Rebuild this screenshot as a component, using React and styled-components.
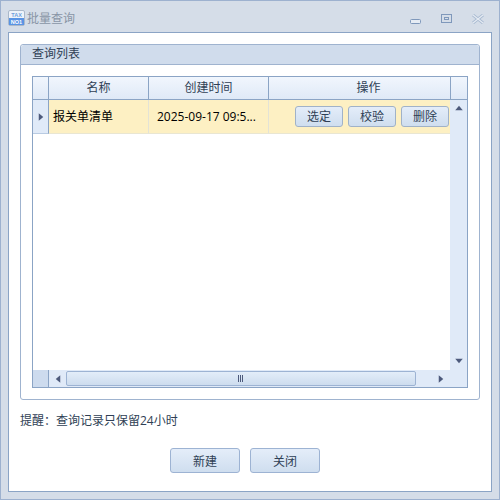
import React from 'react';
import styled, { createGlobalStyle } from 'styled-components';

const GlobalStyle = createGlobalStyle`
  html, body { margin: 0; padding: 0; background: #fff; }
  * { box-sizing: border-box; }
  body { font-family: "Open Sans", "Noto Sans CJK SC", sans-serif; font-size: 12px; }
`;

const LINE = '#8ba4c5';
const HEAD_BG = 'linear-gradient(#f1f6fd, #dfe9f7)';
const BTN_BG = 'linear-gradient(#e4edf9, #cfdeef)';

const Window = styled.div`
  width: 500px;
  height: 500px;
  display: flex;
  flex-direction: column;
  padding: 0 7px 7px;
  background: #d5dde8;
  border: 1px solid #9db1cf;
`;

const TitleBar = styled.div`
  height: 31px;
  flex: none;
  display: flex;
  align-items: center;
  padding-top: 3px;
`;

const AppIcon = styled.svg`
  width: 17px;
  height: 16px;
  margin-right: 2px;
  flex: none;
`;

const Title = styled.span`
  flex: 1;
  color: #8995a6;
  font-size: 12px;
`;

const WinControls = styled.div`
  display: flex;
  align-items: center;
  gap: 19px;
  margin: 1px 8px 0 0;
`;

const WinIcon = styled.svg`
  width: 12px;
  height: 10px;
  display: block;
`;

const Client = styled.div`
  flex: 1;
  display: flex;
  flex-direction: column;
  padding: 11px;
  background: #fff;
  border: 1px solid ${LINE};
`;

const Group = styled.section`
  height: 356px;
  flex: none;
  display: flex;
  flex-direction: column;
  border: 1px solid #9fb3cf;
  border-radius: 3px;
`;

const GroupHeader = styled.header`
  height: 20px;
  flex: none;
  line-height: 18px;
  padding-left: 11px;
  color: #2f3f55;
  background: #d0dcec;
  border-bottom: 1px solid #9fb3cf;
  border-radius: 3px 3px 0 0;
`;

const GroupBody = styled.div`
  padding: 11px 11px 12px;
  flex: 1;
  min-height: 0;
`;

const Table = styled.div`
  width: 436px;
  height: 312px;
  display: flex;
  flex-direction: column;
  border: 1px solid ${LINE};
`;

const HeadRow = styled.div`
  height: 23px;
  flex: none;
  display: grid;
  grid-template-columns: 16px 100px 120px 182px 16px;
  border-bottom: 1px solid ${LINE};
`;

const HeadCell = styled.div`
  background: ${HEAD_BG};
  color: #2f3f55;
  text-align: center;
  line-height: 22px;
  padding-left: ${p => p.$shift || 0}px;
  border-right: 1px solid ${LINE};
  &:last-child { border-right: 0; }
`;

const Middle = styled.div`
  flex: 1;
  min-height: 0;
  display: flex;
`;

const Rows = styled.div`
  flex: 1;
  background: #fff;
`;

const DataRow = styled.div`
  height: 34px;
  display: grid;
  grid-template-columns: 16px 100px 120px 181px;
`;

const RowHead = styled.div`
  background: #e0eaf8;
  border-right: 1px solid ${LINE};
  border-bottom: 1px solid #b9cbe2;
  display: flex;
  align-items: center;
  justify-content: center;
`;

const DataCell = styled.div`
  background: #fdf0c3;
  color: #000;
  padding-left: ${p => p.$inset || 4}px;
  line-height: 33px;
  white-space: nowrap;
  overflow: hidden;
  border-right: 1px solid #e3e3d6;
  border-bottom: 1px solid #e9e6d2;
`;

const ActionCell = styled.div`
  background: #fdf0c3;
  border-bottom: 1px solid #e9e6d2;
  display: flex;
  align-items: center;
  gap: 5px;
  padding: 0 0 1px 26px;
`;

const Button = styled.button`
  width: ${p => p.$wide ? '70px' : '48px'};
  height: ${p => p.$wide ? '25px' : '21px'};
  padding: 0;
  font: inherit;
  color: #2f3f55;
  background: ${BTN_BG};
  border: 1px solid ${p => p.$wide ? '#9db3d3' : '#a0b2c8'};
  border-radius: 3px;
`;

const VScroll = styled.div`
  width: 17px;
  flex: none;
  background: #e0eaf8;
  display: flex;
  flex-direction: column;
  align-items: center;
  justify-content: space-between;
  padding: 5px 0 6px;
`;

const HScroll = styled.div`
  height: 17px;
  flex: none;
  display: flex;
  align-items: center;
  background: #e0eaf8;
`;

const Corner = styled.div`
  width: 16px;
  height: 17px;
  flex: none;
  background: #cddbee;
  border-right: 1px solid ${LINE};
`;

const ArrowSlot = styled.div`
  width: 17px;
  flex: none;
  display: flex;
  justify-content: center;
`;

const Thumb = styled.div`
  width: 350px;
  height: 15px;
  flex: none;
  margin-right: 16px;
  display: flex;
  align-items: center;
  justify-content: center;
  background: linear-gradient(#e3edf9, #cddcee);
  border: 1px solid #9db3d3;
  border-radius: 2px;
`;

const Grip = styled.svg`
  width: 8px;
  height: 7px;
  display: block;
`;

const Notice = styled.p`
  margin: 13px 0 0;
  height: 16px;
  line-height: 16px;
  flex: none;
  color: #2f3f55;
`;

const Footer = styled.div`
  display: flex;
  justify-content: center;
  gap: 10px;
  margin-top: 19px;
  padding-right: 10px;
`;

const ArrowIcon = styled.svg`
  display: block;
`;

const Arrow = ({ dir, size = 10 }) => {
  const points = {
    up: '0,7 5,1 10,7',
    down: '0,1 10,1 5,7',
    left: '7,0 7,10 1,5',
    right: '1,0 1,10 7,5',
  }[dir];
  const vertical = dir === 'up' || dir === 'down';
  return (
    <ArrowIcon viewBox={vertical ? '0 0 10 8' : '0 0 8 10'} width={vertical ? size : 6} height={vertical ? 6 : size}>
      <polygon points={points} fill="#4d5a7c" />
    </ArrowIcon>
  );
};

export default function App() {
  return (
    <>
      <GlobalStyle />
      <Window>
        <TitleBar>
          <AppIcon viewBox="0 0 17 16">
            <rect x="0.5" y="0.5" width="16" height="15" rx="1.5" fill="#eef3fa" stroke="#aab8c9" />
            <rect x="1" y="8" width="15" height="7" fill="#5a94e4" />
            <text x="8.5" y="6.6" textAnchor="middle" fontSize="5.5" fontWeight="700" fill="#6f9fdc" fontFamily="Liberation Sans">TAX</text>
            <text x="8.5" y="13.8" textAnchor="middle" fontSize="5.5" fontWeight="700" fill="#fff" fontFamily="Liberation Sans">NO1</text>
          </AppIcon>
          <Title>批量查询</Title>
          <WinControls>
            <WinIcon viewBox="0 0 12 10">
              <rect x="0.5" y="5.5" width="10" height="4" rx="1" fill="#e6ecf4" stroke="#7f98bb" />
            </WinIcon>
            <WinIcon viewBox="0 0 12 10">
              <rect x="0.5" y="0.5" width="10" height="8" fill="none" stroke="#7f98bb" />
              <rect x="3.5" y="3.5" width="4" height="2" fill="none" stroke="#7f98bb" />
            </WinIcon>
            <WinIcon viewBox="0 0 12 10">
              <path d="M1 1 L11 9 M11 1 L1 9" stroke="#a9bbd2" strokeWidth="3" fill="none" />
              <path d="M1 1 L11 9 M11 1 L1 9" stroke="#e6ebf3" strokeWidth="1.2" fill="none" />
            </WinIcon>
          </WinControls>
        </TitleBar>
        <Client>
          <Group>
            <GroupHeader>查询列表</GroupHeader>
            <GroupBody>
              <Table>
                <HeadRow>
                  <HeadCell />
                  <HeadCell>名称</HeadCell>
                  <HeadCell>创建时间</HeadCell>
                  <HeadCell $shift={18}>操作</HeadCell>
                  <HeadCell />
                </HeadRow>
                <Middle>
                  <Rows>
                    <DataRow>
                      <RowHead><Arrow dir="right" size={8} /></RowHead>
                      <DataCell>报关单清单</DataCell>
                      <DataCell $inset={8}>2025-09-17 09:5...</DataCell>
                      <ActionCell>
                        <Button>选定</Button>
                        <Button>校验</Button>
                        <Button>删除</Button>
                      </ActionCell>
                    </DataRow>
                  </Rows>
                  <VScroll>
                    <Arrow dir="up" />
                    <Arrow dir="down" />
                  </VScroll>
                </Middle>
                <HScroll>
                  <Corner />
                  <ArrowSlot><Arrow dir="left" /></ArrowSlot>
                  <Thumb>
                    <Grip viewBox="0 0 8 7">
                      <path d="M1.5 0V7M3.5 0V7M5.5 0V7" stroke="#4d5a7c" fill="none" />
                    </Grip>
                  </Thumb>
                  <ArrowSlot><Arrow dir="right" /></ArrowSlot>
                </HScroll>
              </Table>
            </GroupBody>
          </Group>
          <Notice>提醒：查询记录只保留24小时</Notice>
          <Footer>
            <Button $wide>新建</Button>
            <Button $wide>关闭</Button>
          </Footer>
        </Client>
      </Window>
    </>
  );
}
